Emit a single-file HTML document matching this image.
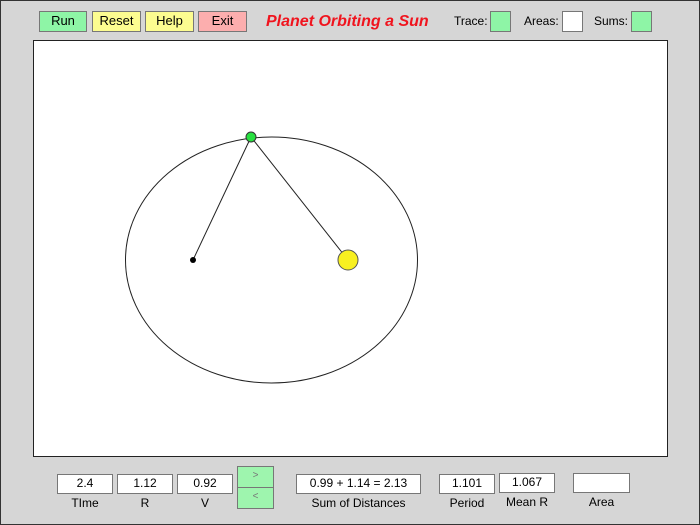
<!DOCTYPE html>
<html><head><style>
body{margin:0;width:700px;height:525px;overflow:hidden;font-family:"Liberation Sans",sans-serif;}
#f{position:absolute;left:0;top:0;width:700px;height:525px;box-sizing:border-box;background:#d6d6d6;border:1px solid #333;}
#i{position:absolute;left:-1px;top:-1px;width:700px;height:525px;white-space:nowrap;}
.b{position:absolute;box-sizing:border-box;border:1px solid #777;font-size:13px;text-align:center;line-height:18px;}
.t{position:absolute;font-size:12px;}
.box{position:absolute;box-sizing:border-box;background:#fff;border:1px solid #777;font-size:12px;text-align:center;line-height:17px;top:474px;height:20px;}
.l{position:absolute;top:496px;font-size:12px;text-align:center;}
</style></head><body><div id="f"><div id="i">
<div class="b" style="left:39px;top:11px;width:48px;height:21px;background:#8ef5a6">Run</div>
<div class="b" style="left:92px;top:11px;width:49px;height:21px;background:#fcfc90">Reset</div>
<div class="b" style="left:145px;top:11px;width:49px;height:21px;background:#fcfc90">Help</div>
<div class="b" style="left:198px;top:11px;width:49px;height:21px;background:#fcaeae">Exit</div>
<div style="position:absolute;left:266px;top:13px;font-size:16px;font-weight:bold;font-style:italic;color:#f0141e;white-space:nowrap">Planet Orbiting a Sun</div>
<div class="t" style="left:454px;top:14px">Trace:</div>
<div class="b" style="left:490px;top:11px;width:21px;height:21px;background:#8ef5a6"></div>
<div class="t" style="left:524px;top:14px">Areas:</div>
<div class="b" style="left:562px;top:11px;width:21px;height:21px;background:#fff"></div>
<div class="t" style="left:594px;top:14px">Sums:</div>
<div class="b" style="left:631px;top:11px;width:21px;height:21px;background:#8ef5a6"></div>
<svg style="position:absolute;left:33px;top:40px" width="635" height="417">
<rect x="0.5" y="0.5" width="634" height="416" fill="#fff" stroke="#222"/>
<ellipse cx="238.5" cy="220" rx="146" ry="123" fill="none" stroke="#222" stroke-width="1"/>
<line x1="160" y1="220" x2="218" y2="97" stroke="#222"/>
<line x1="315" y1="220" x2="218" y2="97" stroke="#222"/>
<circle cx="160" cy="220" r="3" fill="#000"/>
<circle cx="315" cy="220" r="10" fill="#f8f020" stroke="#555"/>
<circle cx="218" cy="97" r="5" fill="#28e040" stroke="#333"/>
</svg>
<div class="box" style="left:57px;width:56px">2.4</div>
<div class="box" style="left:117px;width:56px">1.12</div>
<div class="box" style="left:177px;width:56px">0.92</div>
<div class="b" style="left:237px;top:466px;width:37px;height:22px;background:#9ef5ae;font-size:10px;color:#777">&gt;</div>
<div class="b" style="left:237px;top:487px;width:37px;height:22px;background:#9ef5ae;font-size:10px;color:#777">&lt;</div>
<div class="box" style="left:296px;width:125px">0.99 + 1.14 = 2.13</div>
<div class="box" style="left:439px;width:56px">1.101</div>
<div class="box" style="left:499px;width:56px;top:473px">1.067</div>
<div class="box" style="left:573px;width:57px;top:473px"></div>
<div class="l" style="left:57px;width:56px">TIme</div>
<div class="l" style="left:117px;width:56px">R</div>
<div class="l" style="left:177px;width:56px">V</div>
<div class="l" style="left:296px;width:125px">Sum of Distances</div>
<div class="l" style="left:439px;width:56px">Period</div>
<div class="l" style="left:494px;width:66px;top:495px">Mean R</div>
<div class="l" style="left:573px;width:57px;top:495px">Area</div>
</div></div></body></html>
